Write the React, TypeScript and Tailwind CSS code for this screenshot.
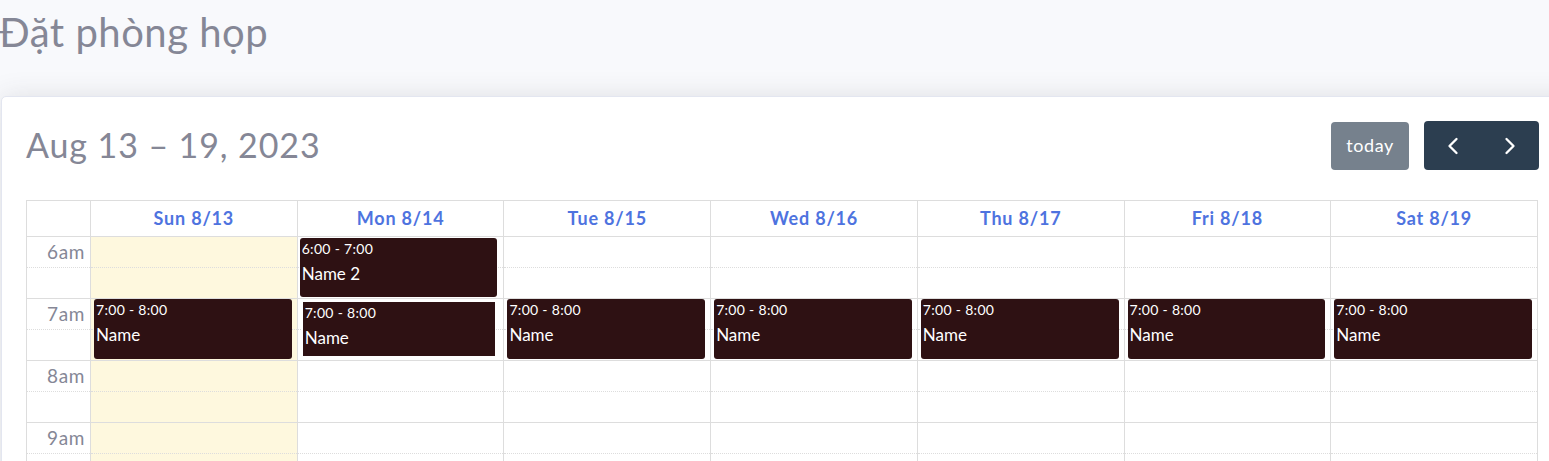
import { ChevronLeft, ChevronRight } from 'lucide-react';

const days = [
  { label: 'Sun 8/13', today: true },
  { label: 'Mon 8/14' },
  { label: 'Tue 8/15' },
  { label: 'Wed 8/16' },
  { label: 'Thu 8/17' },
  { label: 'Fri 8/18' },
  { label: 'Sat 8/19' },
];

const hours = ['6am', '7am', '8am', '9am'];

type Ev = { time: string; name: string; top: number; height: number; left: number; right: number; ring?: boolean };

const events: Ev[][] = [
  [{ time: '7:00 - 8:00', name: 'Name', top: 62, height: 60, left: 3, right: 5 }],
  [
    { time: '6:00 - 7:00', name: 'Name 2', top: 1, height: 59, left: 2, right: 6 },
    { time: '7:00 - 8:00', name: 'Name', top: 65, height: 54, left: 5, right: 8, ring: true },
  ],
  [{ time: '7:00 - 8:00', name: 'Name', top: 62, height: 60, left: 3, right: 5 }],
  [{ time: '7:00 - 8:00', name: 'Name', top: 62, height: 60, left: 3, right: 5 }],
  [{ time: '7:00 - 8:00', name: 'Name', top: 62, height: 60, left: 3, right: 5 }],
  [{ time: '7:00 - 8:00', name: 'Name', top: 62, height: 60, left: 3, right: 5 }],
  [{ time: '7:00 - 8:00', name: 'Name', top: 62, height: 60, left: 3, right: 5 }],
];

function Slots() {
  return (
    <>
      {hours.map((h) => (
        <div key={h}>
          <div className="h-[31px] border-b border-dotted border-[#dddddd]" />
          <div className="h-[31px] border-b border-[#dddddd]" />
        </div>
      ))}
    </>
  );
}

export default function App() {
  return (
    <div className="w-[1549px] h-[461px] overflow-hidden bg-[#f8f9fc] font-['Lato',sans-serif] text-[#858796]">
      <h1 className="h-[64px] leading-[64px] text-[40px] tracking-[0.5px] font-normal text-[#858796] mb-[32px] -ml-[1px]">
        Đặt phòng họp
      </h1>

      <div className="ml-[1px] w-[1600px] bg-white border border-[#e3e6f0] rounded-[5px] shadow-[0_0.15rem_1.75rem_0_rgba(58,59,69,0.15)] pl-[24px] pt-[24px]">
        <div className="w-[1513px]">
          {/* toolbar */}
          <div className="flex items-center justify-between h-[49px] mb-[30px]">
            <h2 className="text-[34px] tracking-[0.9px] text-[#858796] leading-none -mt-[2px]">Aug 13 – 19, 2023</h2>
            <div className="flex items-center gap-[15px]">
              <button className="h-[48px] w-[78px] rounded-[4px] bg-[#76818d] text-white text-[18px] tracking-[0.6px]">
                today
              </button>
              <div className="flex h-[49px] rounded-[4px] overflow-hidden bg-[#2c3e50] text-white">
                <button className="w-[57px] flex items-center justify-center">
                  <ChevronLeft size={28} strokeWidth={2} />
                </button>
                <button className="w-[58px] flex items-center justify-center">
                  <ChevronRight size={28} strokeWidth={2} />
                </button>
              </div>
            </div>
          </div>

          {/* calendar grid */}
          <div className="w-[1512px] border-l border-t border-[#dddddd] grid grid-cols-[64px_repeat(7,1fr)]">
            {/* header */}
            <div className="h-[36px] border-r border-b border-[#dddddd]" />
            {days.map((d) => (
              <div
                key={d.label}
                className="h-[36px] pb-[1px] border-r border-b border-[#dddddd] flex items-center justify-center text-[18px] tracking-[0.8px] font-bold text-[#4e73df]"
              >
                {d.label}
              </div>
            ))}

            {/* axis */}
            <div className="border-r border-[#dddddd] relative">
              {hours.map((h) => (
                <div key={h}>
                  <div className="h-[31px] border-b border-dotted border-[#dddddd] text-right pr-[5px] text-[19px] tracking-[0.6px] leading-[29px]">
                    {h}
                  </div>
                  <div className="h-[31px] border-b border-[#dddddd]" />
                </div>
              ))}
            </div>

            {/* day columns */}
            {days.map((d, i) => (
              <div key={d.label} className={`relative border-r border-[#dddddd] ${d.today ? 'bg-[#fef8de]' : ''}`}>
                <Slots />
                {events[i].map((e, j) => (
                  <div
                    key={j}
                    className={`absolute bg-[#2e1113] text-white rounded-[3px] pl-[2px] overflow-hidden ${e.ring ? 'shadow-[0_0_0_1px_#ffffff] rounded-none' : ''}`}
                    style={{ top: e.top, height: e.height, left: e.left, right: e.right }}
                  >
                    <div className="text-[14px] tracking-[0.3px] leading-[16px] mt-[3px]">{e.time}</div>
                    <div className="text-[17px] leading-[20px] mt-[7px]">{e.name}</div>
                  </div>
                ))}
              </div>
            ))}
          </div>
        </div>
      </div>
    </div>
  );
}
